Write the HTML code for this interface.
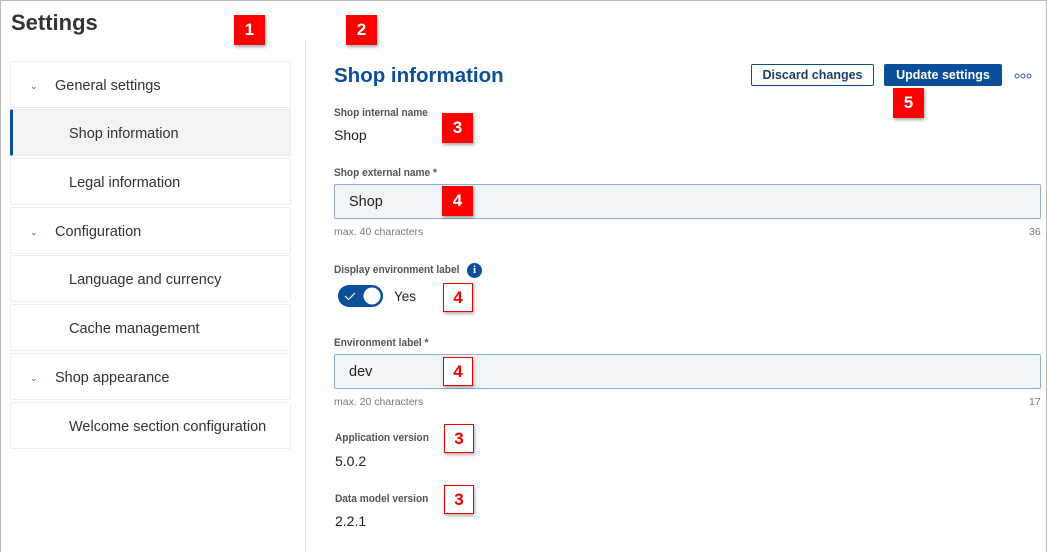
<!DOCTYPE html>
<html><head><meta charset="utf-8"><style>
*{box-sizing:border-box;margin:0;padding:0}
body{width:1047px;height:552px;overflow:hidden;background:#fff;font-family:"Liberation Sans",sans-serif;color:#222;position:relative}
.frame{position:absolute;left:0;top:0;width:1047px;height:552px;border:1px solid #bbb;border-bottom:none}
.a{position:absolute;white-space:nowrap}
.item{position:absolute;left:10px;width:281px;height:47px;background:#fff;border:1px solid #eceef1;border-radius:2px;font-size:14.5px;color:#333;line-height:48px}
.item.sel{background:#f1f4f8;border-left:3px solid #0b4e9a}
.chev{position:absolute;left:19px;top:0;font-size:9px;color:#3a5f91}
.lbl{position:absolute;font-size:11px;color:#555;font-weight:bold;transform:scaleX(.92);transform-origin:left}
.val{position:absolute;font-size:14px;color:#222}
.inp{position:absolute;left:334px;width:707px;height:35px;background:#f1f4f9;border:1px solid #8fb0d6;border-radius:2px;font-size:14.5px;line-height:35px;padding-left:14px;color:#222}
.hint{position:absolute;font-size:10.5px;color:#777}
.bf{position:absolute;width:31px;height:30px;background:#f00;color:#fff;font-weight:bold;font-size:17px;text-align:center;line-height:30px;box-shadow:1px 2px 3px rgba(0,0,0,.35)}
.bo{position:absolute;width:30px;height:29px;background:#fff;border:1px solid #e00;color:#e00;font-weight:bold;font-size:17px;text-align:center;line-height:27px;box-shadow:1px 2px 3px rgba(0,0,0,.3)}
</style></head><body>
<div class="frame"></div>
<div class="a" style="left:11px;top:10px;font-size:22px;font-weight:bold;color:#333">Settings</div>
<div style="position:absolute;left:305px;top:40px;width:1px;height:512px;background:#dde1e6"></div>

<div class="item" style="top:61px"><span class="chev">&#8964;</span><span style="position:absolute;left:44px">General settings</span></div>
<div class="item sel" style="top:109px"><span style="position:absolute;left:56px">Shop information</span></div>
<div class="item" style="top:158px"><span style="position:absolute;left:58px">Legal information</span></div>
<div class="item" style="top:207px"><span class="chev">&#8964;</span><span style="position:absolute;left:44px">Configuration</span></div>
<div class="item" style="top:255px"><span style="position:absolute;left:58px">Language and currency</span></div>
<div class="item" style="top:304px"><span style="position:absolute;left:58px">Cache management</span></div>
<div class="item" style="top:353px"><span class="chev">&#8964;</span><span style="position:absolute;left:44px">Shop appearance</span></div>
<div class="item" style="top:402px"><span style="position:absolute;left:58px">Welcome section configuration</span></div>

<div class="a" style="left:334px;top:64px;font-size:20.5px;font-weight:bold;color:#0b4e9a">Shop information</div>
<div class="a" style="left:751px;top:64px;width:123px;height:22px;border:1px solid #0b4e9a;border-radius:2px;font-size:12.5px;font-weight:bold;color:#1c3e6b;text-align:center;line-height:21px">Discard changes</div>
<div class="a" style="left:884px;top:64px;width:118px;height:22px;background:#0b4e9a;border-radius:2px;font-size:12.5px;font-weight:bold;color:#fff;text-align:center;line-height:23px">Update settings</div>
<svg class="a" style="left:1014px;top:72px" width="18" height="8"><circle cx="3" cy="4" r="2" fill="none" stroke="#3a5f91" stroke-width="1"/><circle cx="9" cy="4" r="2" fill="none" stroke="#3a5f91" stroke-width="1"/><circle cx="15" cy="4" r="2" fill="none" stroke="#3a5f91" stroke-width="1"/></svg>

<div class="lbl" style="left:334px;top:107px">Shop internal name</div>
<div class="val" style="left:334px;top:127px">Shop</div>
<div class="lbl" style="left:334px;top:167px">Shop external name *</div>
<div class="inp" style="top:184px">Shop</div>
<div class="hint" style="left:334px;top:226px">max. 40 characters</div>
<div class="hint" style="left:1029px;top:226px">36</div>

<div class="lbl" style="left:334px;top:264px">Display environment label</div>
<div class="a" style="left:467px;top:263px;width:15px;height:15px;border-radius:50%;background:#0b4e9a;color:#fff;font-size:11px;font-weight:bold;text-align:center;line-height:15px;font-family:'Liberation Serif',serif">i</div>
<div class="a" style="left:338px;top:285px;width:45px;height:22px;border-radius:11px;background:#0b4e9a">
 <svg width="45" height="22" style="position:absolute;left:0;top:0"><path d="M7 11 L10.5 14.5 L17 8" stroke="#fff" stroke-width="1.2" fill="none"/><circle cx="34" cy="11" r="8.5" fill="#fff"/></svg>
</div>
<div class="val" style="left:394px;top:289px;font-size:13.5px">Yes</div>

<div class="lbl" style="left:334px;top:337px">Environment label *</div>
<div class="inp" style="top:354px">dev</div>
<div class="hint" style="left:334px;top:396px">max. 20 characters</div>
<div class="hint" style="left:1029px;top:396px">17</div>

<div class="lbl" style="left:335px;top:432px">Application version</div>
<div class="val" style="left:335px;top:453px">5.0.2</div>
<div class="lbl" style="left:335px;top:493px">Data model version</div>
<div class="val" style="left:335px;top:513px">2.2.1</div>

<div class="bf" style="left:234px;top:15px">1</div>
<div class="bf" style="left:346px;top:15px">2</div>
<div class="bf" style="left:442px;top:113px">3</div>
<div class="bf" style="left:442px;top:186px">4</div>
<div class="bo" style="left:443px;top:283px">4</div>
<div class="bo" style="left:443px;top:357px">4</div>
<div class="bo" style="left:444px;top:424px">3</div>
<div class="bo" style="left:444px;top:485px">3</div>
<div class="bf" style="left:893px;top:88px">5</div>
</body></html>
